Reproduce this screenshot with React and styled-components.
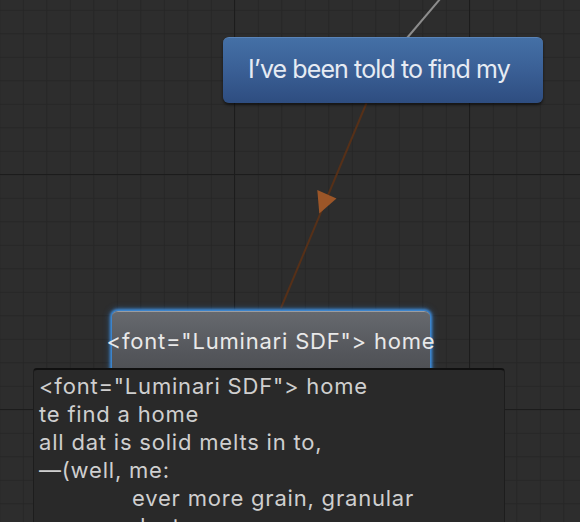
import React from 'react';
import styled, { createGlobalStyle } from 'styled-components';

const GlobalStyle = createGlobalStyle`
    html, body {
        margin: 0;
        padding: 0;
        background: #2d2d2d;
    }
    body {
        font-family: Inter, "Noto Sans", "DejaVu Sans", sans-serif;
    }
`;

// graph canvas with the minor / major grid
const Canvas = styled.div`
    position: relative;
    width: 580px;
    height: 522px;
    overflow: hidden;
    background-color: #2d2d2d;
    background-image:
        linear-gradient(to right, #1c1c1c 1px, transparent 1px),
        linear-gradient(to bottom, #1c1c1c 1px, transparent 1px),
        linear-gradient(to right, #262626 1px, transparent 1px),
        linear-gradient(to bottom, #262626 1px, transparent 1px);
    background-size: 235px 235px, 235px 235px, 23.5px 23.5px, 23.5px 23.5px;
    background-position: 234px 174px, 234px 174px, 22.8px 9.8px, 22.8px 9.8px;
`;

const Wires = styled.svg`
    position: absolute;
    left: 0;
    top: 0;
    width: 580px;
    height: 522px;
    pointer-events: none;
`;

const Node = styled.div`
    position: absolute;
    left: ${props => props.x}px;
    top: ${props => props.y}px;
    width: ${props => props.w}px;
    height: 66px;
    box-sizing: border-box;
    border-radius: 6px;
    display: flex;
    align-items: center;
    justify-content: center;
    white-space: nowrap;
    color: ${props => props.selected ? '#e9e9e9' : '#e6ebf3'};
    padding: ${props => props.selected ? '0 0 8px 0' : '0 8px 4px 0'};
    background: ${props => props.selected
        ? 'linear-gradient(to bottom, #66696e 0%, #55575c 60%, #4c4e52 100%)'
        : 'linear-gradient(to bottom, #4470a6 0%, #3a5f95 50%, #2e4d80 100%)'};
    border-top: 1px solid ${props => props.selected ? '#9a9ca0' : '#5a84b8'};
    box-shadow: ${props => props.selected
        ? '0 0 3px 2px #3f8fdf, 0 0 6px 3px rgba(50,120,200,0.35)'
        : '0 2px 3px rgba(0,0,0,0.55)'};
`;

const Label = styled.span`
    display: block;
    font-size: ${props => props.size}px;
    letter-spacing: ${props => props.spacing}px;
`;

// text preview box under the selected node
const Preview = styled.div`
    position: absolute;
    left: 33px;
    top: 368px;
    width: 472px;
    height: 170px;
    box-sizing: border-box;
    background: #292929;
    border: 1px solid #1d1d1d;
    border-top: 2px solid #101010;
    border-radius: 4px;
    padding: 2px 5px;
    color: #cfcfcf;
    font-size: 22px;
    letter-spacing: 0.8px;
    line-height: 28px;
    white-space: nowrap;
    overflow: hidden;
`;

const Line = styled.div`
    padding-left: ${props => props.indent ? '93px' : '0'};
`;

const lines = [
    { text: '<font="Luminari SDF"> home' },
    { text: 'te find a home' },
    { text: 'all dat is solid melts in to,' },
    { text: '\u2014(well, me:' },
    { text: 'ever more grain, granular', indent: true },
    { text: 'dust', indent: true },
];

export default function App() {
    return (
        <>
            <GlobalStyle />
            <Canvas>
                <Wires viewBox="0 0 580 522">
                    <line x1="446" y1="-8" x2="407" y2="38" stroke="#8c8c8c" strokeWidth="2" />
                    <line x1="366.5" y1="103" x2="281" y2="308" stroke="#563018" strokeWidth="2" />
                    <polygon points="317.3,190 336.5,198.5 319.3,213.5" fill="#9c5628" />
                </Wires>

                <Node x={223} y={37} w={320}>
                    <Label size={25} spacing={-0.9}>I’ve been told to find my</Label>
                </Node>

                <Node selected x={112} y={311} w={318}>
                    <Label size={22} spacing={0.8}>{'<font="Luminari SDF"> home'}</Label>
                </Node>

                <Preview>
                    {lines.map((l, i) => (
                        <Line key={i} indent={l.indent}>{l.text}</Line>
                    ))}
                </Preview>
            </Canvas>
        </>
    );
}
